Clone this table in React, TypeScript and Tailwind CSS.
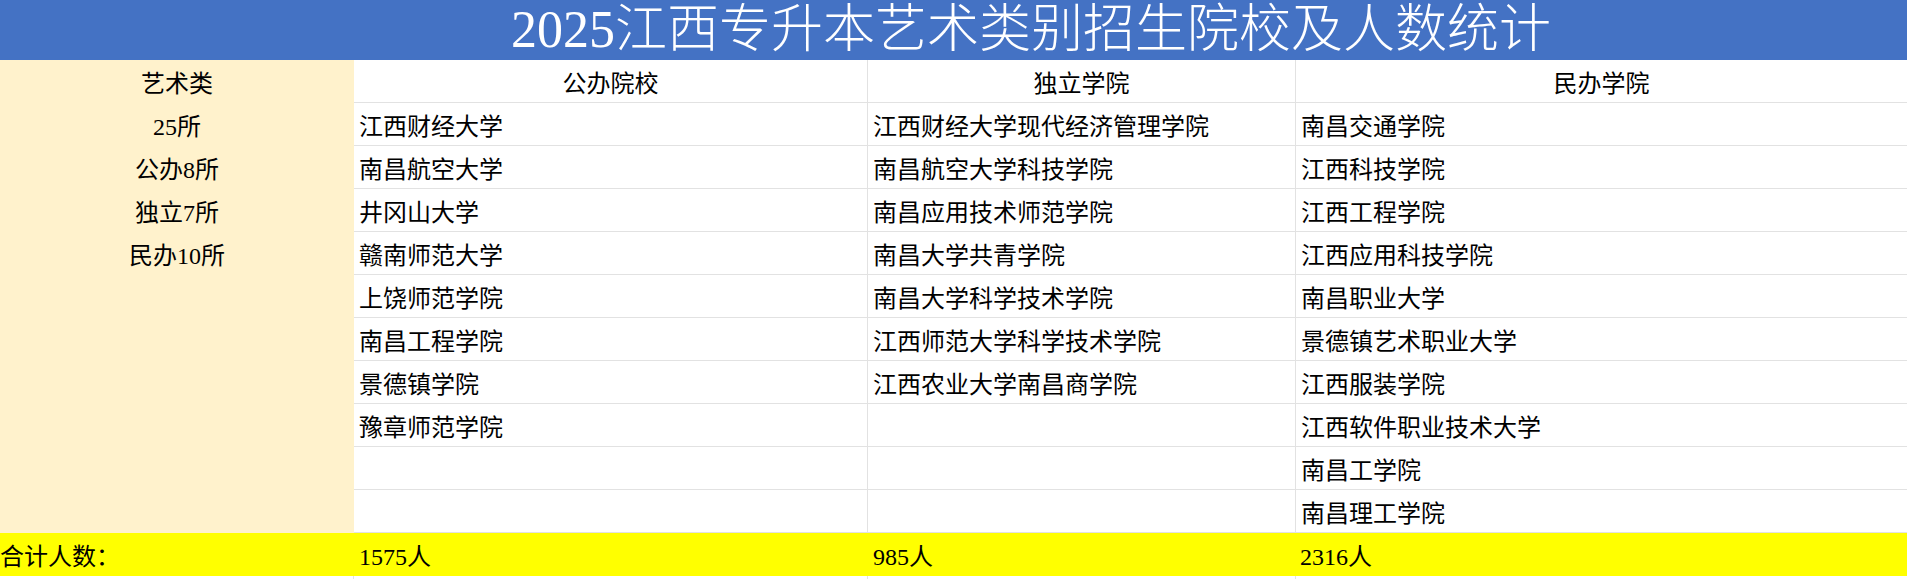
const publicSchools = [
  "江西财经大学",
  "南昌航空大学",
  "井冈山大学",
  "赣南师范大学",
  "上饶师范学院",
  "南昌工程学院",
  "景德镇学院",
  "豫章师范学院",
  "",
  "",
];

const independentSchools = [
  "江西财经大学现代经济管理学院",
  "南昌航空大学科技学院",
  "南昌应用技术师范学院",
  "南昌大学共青学院",
  "南昌大学科学技术学院",
  "江西师范大学科学技术学院",
  "江西农业大学南昌商学院",
  "",
  "",
  "",
];

const privateSchools = [
  "南昌交通学院",
  "江西科技学院",
  "江西工程学院",
  "江西应用科技学院",
  "南昌职业大学",
  "景德镇艺术职业大学",
  "江西服装学院",
  "江西软件职业技术大学",
  "南昌工学院",
  "南昌理工学院",
];

const summary = ["艺术类", "25所", "公办8所", "独立7所", "民办10所"];

const font = "font-['Liberation_Serif','Noto_Sans_CJK_SC',serif]";

export default function App() {
  return (
    <div className={`w-[1907px] h-[579px] bg-white text-black overflow-hidden ${font}`}>
      {/* title */}
      <div className="h-[60px] bg-[#4472c4] flex items-center pl-[511px]">
        <span className="text-[52px] leading-none text-white font-light">
          2025江西专升本艺术类别招生院校及人数统计
        </span>
      </div>

      <div className="grid grid-cols-[354px_514px_428px_1fr]">
        {/* left summary column */}
        <div className="row-span-11 bg-[#fff2cc] flex flex-col">
          {summary.map((s) => (
            <div key={s} className="h-[43px] flex items-center justify-center text-[24px] pt-[5px]">
              {s}
            </div>
          ))}
        </div>

        <div className="h-[43px] border-b border-r border-[#e2e2e2] flex items-center justify-center text-[24px] pt-[5px]">
          公办院校
        </div>
        <div className="h-[43px] border-b border-r border-[#e2e2e2] flex items-center justify-center text-[24px] pt-[5px]">
          独立学院
        </div>
        <div className="h-[43px] border-b border-[#e2e2e2] flex items-center justify-center text-[24px] pt-[5px]">
          民办学院
        </div>

        {publicSchools.map((p, i) => (
          <Row key={i} cells={[p, independentSchools[i], privateSchools[i]]} />
        ))}
      </div>

      {/* totals */}
      <div className="h-[43px] bg-[#ffff00] grid grid-cols-[354px_514px_428px_1fr] text-[24px]">
        <div className="flex items-center pt-[5px]">合计人数：</div>
        <div className="flex items-center pl-[5px] pt-[5px]">1575人</div>
        <div className="flex items-center pl-[5px] pt-[5px]">985人</div>
        <div className="flex items-center pl-[4px] pt-[5px]">2316人</div>
      </div>
      <div className="h-[3px] grid grid-cols-[354px_514px_428px_1fr]">
        <div className="border-r border-[#e2e2e2]" />
        <div className="border-r border-[#e2e2e2]" />
        <div className="border-r border-[#e2e2e2]" />
        <div />
      </div>
    </div>
  );
}

function Row({ cells }: { cells: string[] }) {
  return (
    <>
      {cells.map((c, j) => (
        <div
          key={j}
          className={`h-[43px] border-b border-[#e2e2e2] flex items-center pl-[5px] pt-[5px] text-[24px] whitespace-nowrap ${
            j < 2 ? "border-r" : ""
          }`}
        >
          {c}
        </div>
      ))}
    </>
  );
}
